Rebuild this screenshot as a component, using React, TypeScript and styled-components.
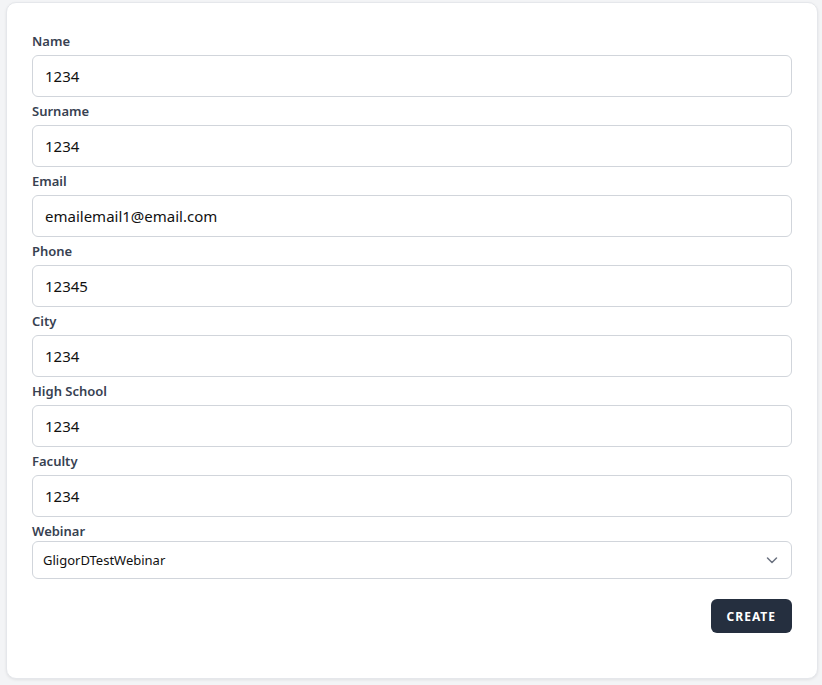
import { createGlobalStyle } from 'styled-components';
import styled from 'styled-components';

const fields = [
  { label: 'Name', value: '1234' },
  { label: 'Surname', value: '1234' },
  { label: 'Email', value: 'emailemail1@email.com' },
  { label: 'Phone', value: '12345' },
  { label: 'City', value: '1234' },
  { label: 'High School', value: '1234' },
  { label: 'Faculty', value: '1234' },
];

const App = () => {
  return (
    <>
      <GlobalStyle />
      <Page>
        <Card>
          {fields.map((item) => (
            <Field key={item.label}>
              <Label>{item.label}</Label>
              <Input defaultValue={item.value} />
            </Field>
          ))}
          <Field>
            <Label $tight>Webinar</Label>
            <SelectWrap>
              <Select defaultValue="GligorDTestWebinar">
                <option>GligorDTestWebinar</option>
              </Select>
              <Chevron width="20" height="20" viewBox="0 0 20 20" fill="none">
                <path d="M5.5 8l4.5 4.5L14.5 8" stroke="#6b7280" strokeWidth="1.5" strokeLinecap="round" strokeLinejoin="round" />
              </Chevron>
            </SelectWrap>
          </Field>
          <Actions>
            <CreateButton>CREATE</CreateButton>
          </Actions>
        </Card>
      </Page>
    </>
  );
};

const GlobalStyle = createGlobalStyle`
  * {
    box-sizing: border-box;
  }

  body {
    margin: 0;
    background-color: #f3f4f6;
    font-family: 'Noto Sans', 'Open Sans', sans-serif;
  }
`;

const Page = styled.div`
  width: 822px;
  height: 685px;
  padding: 2px 4px 0 6px;
`;

const Card = styled.div`
  width: 812px;
  height: 677px;
  background-color: #ffffff;
  border: 1px solid #e5e7eb;
  border-radius: 10px;
  box-shadow: 0 1px 3px rgba(0, 0, 0, 0.08);
  padding: 24px 25px 45px 25px;
  display: flex;
  flex-direction: column;
`;

const Field = styled.div`
  display: flex;
  flex-direction: column;
`;

const Label = styled.label<{ $tight?: boolean }>`
  margin: 4px 0 ${({ $tight }) => ($tight ? '0' : '4px')};
  line-height: 20px;
  font-size: 13px;
  font-weight: 600;
  color: #374151;
`;

const Input = styled.input`
  height: 42px;
  width: 100%;
  padding: 0 12px;
  border: 1px solid #d1d5db;
  border-radius: 6px;
  font-family: inherit;
  font-size: 15px;
  color: #111111;
  background: #ffffff;
  outline: none;
`;

const SelectWrap = styled.div`
  position: relative;
`;

const Select = styled.select`
  appearance: none;
  height: 38px;
  width: 100%;
  padding: 0 36px 0 10px;
  border: 1px solid #d1d5db;
  border-radius: 6px;
  font-family: inherit;
  font-size: 13px;
  color: #111111;
  background: #ffffff;
  outline: none;
`;

const Chevron = styled.svg`
  position: absolute;
  right: 10px;
  top: 9px;
  pointer-events: none;
`;

const Actions = styled.div`
  display: flex;
  justify-content: flex-end;
  margin-top: 20px;
`;

const CreateButton = styled.button`
  height: 34px;
  padding: 0 16px;
  border: none;
  border-radius: 6px;
  background-color: #252f3f;
  color: #ffffff;
  font-family: inherit;
  font-size: 12px;
  font-weight: 700;
  letter-spacing: 1px;
`;

export default App;
